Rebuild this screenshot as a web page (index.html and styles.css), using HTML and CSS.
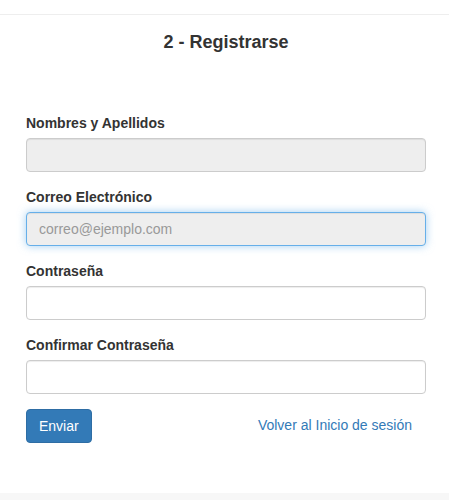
FILE: index.html
```html
<!DOCTYPE html>
<html lang="es">
<head>
<meta charset="utf-8">
<title>Registrarse</title>
<link rel="stylesheet" href="styles.css">
</head>
<body>
<div class="top"></div>
<main class="panel">
  <h3 class="title">2 - Registrarse</h3>
  <form class="form">
    <div class="group">
      <label class="label">Nombres y Apellidos</label>
      <input class="input" type="text" disabled>
    </div>
    <div class="group">
      <label class="label">Correo Electrónico</label>
      <input class="input focus" type="email" placeholder="correo@ejemplo.com" readonly>
    </div>
    <div class="group">
      <label class="label">Contraseña</label>
      <input class="input" type="password">
    </div>
    <div class="group">
      <label class="label">Confirmar Contraseña</label>
      <input class="input" type="password">
    </div>
    <div class="actions">
      <button class="btn" type="button">Enviar</button>
      <a class="link" href="#">Volver al Inicio de sesión</a>
    </div>
  </form>
</main>
<div class="bottom"></div>
</body>
</html>
```
FILE: styles.css
```css
* { box-sizing: border-box; }
html, body { margin: 0; padding: 0; }
body {
  font-family: "Liberation Sans", Arial, sans-serif;
  font-size: 14px;
  line-height: 1.42857;
  color: #333;
  background: #fff;
  height: 500px;
  display: flex;
  flex-direction: column;
}
.top { height: 15px; border-bottom: 1px solid #eeeeee; }
.panel { flex: 1; padding: 0 23px 0 26px; }
.title {
  margin: 17px 0 0;
  font-size: 18px;
  line-height: 20px;
  font-weight: bold;
  text-align: center;
  color: #333;
  padding-left: 0;
}
.form { margin-top: 61px; }
.group { margin-bottom: 15px; display: flex; flex-direction: column; }
.label {
  font-weight: bold;
  line-height: 20px;
  margin-bottom: 5px;
  color: #333;
}
.input {
  width: 400px;
  height: 34px;
  padding: 6px 12px;
  font-family: inherit;
  font-size: 14px;
  color: #555;
  background: #fff;
  border: 1px solid #ccc;
  border-radius: 4px;
  box-shadow: inset 0 1px 1px rgba(0,0,0,.075);
  outline: none;
}
.input:disabled, .input[readonly] { background: #eeeeee; }
.input::placeholder { color: #999; }
.focus {
  border-color: #66afe9;
  box-shadow: inset 0 1px 1px rgba(0,0,0,.075), 0 0 8px rgba(102,175,233,.6);
}
.actions {
  width: 400px;
  display: flex;
  justify-content: space-between;
  align-items: center;
}
.btn {
  height: 34px;
  padding: 6px 12px;
  font-family: inherit;
  font-size: 14px;
  color: #fff;
  background: #337ab7;
  border: 1px solid #2e6da4;
  border-radius: 4px;
}
.link {
  color: #337ab7;
  text-decoration: none;
  margin-right: 14px;
}
.bottom { height: 7px; background: #f7f7f7; }
```
